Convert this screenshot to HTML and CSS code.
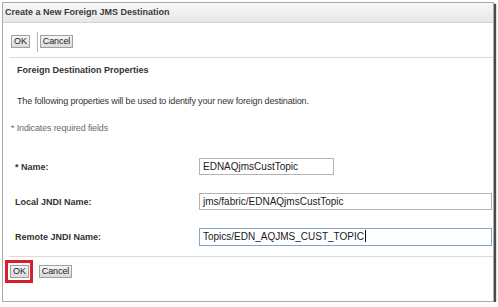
FILE: index.html
```html
<!DOCTYPE html>
<html lang="en">
  <head>
    <meta charset="UTF-8" />
    <title>Create a New Foreign JMS Destination</title>
    <link rel="stylesheet" href="styles.css">
  </head>
  <body>
    <div id="frame">
      <div class="titlebar">Create a New Foreign JMS Destination</div>

      <div class="toolbar">
        <span class="btn btn-ok">OK</span>
        <span class="sep"></span>
        <span class="btn">Cancel</span>
      </div>
      <div class="rule"></div>

      <div class="section">
        <h2>Foreign Destination Properties</h2>
        <p class="intro">The following properties will be used to identify your new foreign destination.</p>
        <p class="required">* Indicates required fields</p>

        <div class="rows">
          <div class="row">
            <label>* Name:</label>
            <div class="field field-short">EDNAQjmsCustTopic</div>
          </div>
          <div class="row">
            <label>Local JNDI Name:</label>
            <div class="field">jms/fabric/EDNAQjmsCustTopic</div>
          </div>
          <div class="row">
            <label>Remote JNDI Name:</label>
            <div class="field field-focus">Topics/EDN_AQJMS_CUST_TOPIC<span class="caret"></span></div>
          </div>
        </div>
      </div>

      <div class="rule rule-bottom"></div>
      <div class="toolbar toolbar-bottom">
        <span class="mark"><span class="btn">OK</span></span>
        <span class="btn btn-cancel">Cancel</span>
      </div>
    </div>
  </body>
</html>
```

FILE: styles.css
```css
html,
body {
  margin: 0;
  padding: 0;
  background: #fff;
}
body {
  font: normal 9px/12px "Liberation Sans", Arial, sans-serif;
  color: #333;
}

#frame {
  margin: 2px 0 0 2px;
  width: 490px;
  height: 298px;
  border: 1px solid #a9a9a9;
  box-shadow: 2px 2px 1px rgba(30, 30, 30, 0.8);
}

/* Title */
.titlebar {
  height: 19px;
  line-height: 19px;
  padding-left: 2px;
  font-weight: bold;
  color: #3a3a3a;
  background: linear-gradient(#f8f8f8, #e7e7e7);
  border-bottom: 1px solid #d4d4d4;
}

/* Toolbars */
.toolbar {
  display: flex;
  align-items: center;
  height: 31px;
  padding: 3px 0 0 8px;
}
.btn {
  display: inline-block;
  height: 11px;
  line-height: 11px;
  padding: 0 2px;
  border: 1px solid #a0a0a0;
  background: linear-gradient(#f6f6f6, #dadada);
  color: #222;
  letter-spacing: -0.1px;
}
.sep {
  width: 1px;
  height: 20px;
  margin: 0 2px 0 7px;
  background: #b4b4b4;
}
.rule {
  margin-left: 6px;
  border-top: 1px solid #dadada;
}

/* Section */
.section {
  padding-top: 6px;
}
.section h2 {
  margin: 0 0 19px 14px;
  font-size: 9px;
  line-height: 12px;
  color: #333;
}
.intro {
  margin: 0 0 15px 14px;
  letter-spacing: -0.15px;
}
.required {
  margin: 0 0 24px 8px;
  color: #6a6a6a;
  letter-spacing: -0.15px;
}

/* Form */
.rows {
  display: flex;
  flex-direction: column;
  gap: 18px;
  padding-right: 1px;
}
.row {
  display: flex;
  align-items: center;
}
.row label {
  width: 196px;
  padding-left: 12px;
  box-sizing: border-box;
  font-weight: bold;
  color: #333;
}
.field {
  flex: 1;
  height: 15px;
  line-height: 15px;
  padding-left: 3px;
  border: 1px solid #b3b3b3;
  font: normal 10px/15px "Liberation Sans", Arial, sans-serif;
  color: #1a1a1a;
}
.field-short {
  flex: none;
  width: 130px;
}
.field-focus {
  height: 16px;
  line-height: 16px;
  border-color: #86a6cf;
}
.caret {
  display: inline-block;
  width: 1px;
  height: 12px;
  margin-left: 1px;
  vertical-align: -2px;
  background: #111;
}

/* Bottom bar */
.rule-bottom {
  margin-top: 10px;
}
.toolbar-bottom {
  height: auto;
  padding: 3px 0 0 2px;
}
.mark {
  display: inline-block;
  padding: 2px 1px 2px 2px;
  border: 3px solid #d8202c;
}
.btn-cancel {
  margin-left: 6px;
}
```
